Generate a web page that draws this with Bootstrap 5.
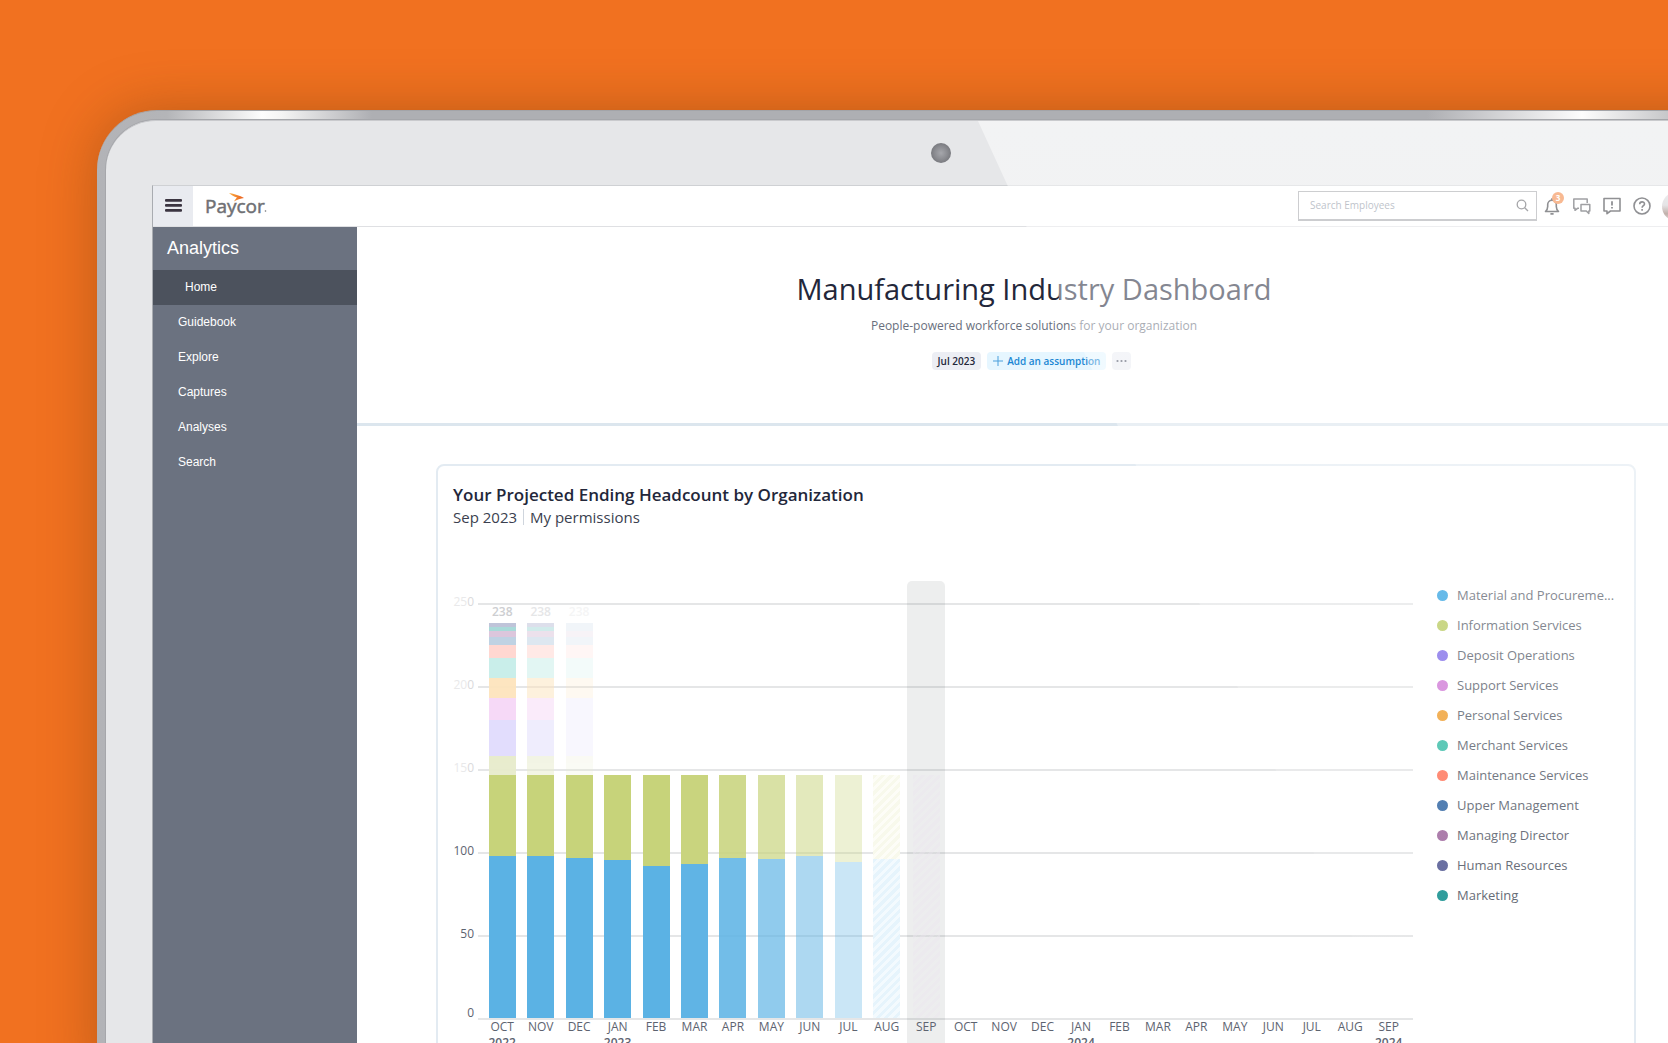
<!DOCTYPE html>
<html lang="en">
<head>
<meta charset="utf-8">
<meta name="viewport" content="width=device-width, initial-scale=1">
<title>Paycor Analytics</title>
<link href="https://cdn.jsdelivr.net/npm/bootstrap@5.3.0/dist/css/bootstrap.min.css" rel="stylesheet">
<style>
body{font-family:"Open Sans","Noto Sans",sans-serif;background:#f17120;color:#23273a}
.stage{height:100vh;padding:110px 0 0 97px}
/* tablet frame: runs past the right edge of the stage */
.device{width:calc(100% + 120px);padding:9px 9px 0;border-radius:60px 60px 0 0;
  background:linear-gradient(90deg,#b2b3b7 0,#b4b5b8 70px,#fdfdfd 165px,#f4f4f4 185px,#aeafb3 275px,#aeafb3 calc(100% - 360px),#fdfdfd calc(100% - 205px),#b4b5b8 calc(100% - 90px));
  border:1px solid #a3a4a8;border-width:1px 1px 0 0;box-shadow:0 0 55px rgba(110,60,10,.4)}
.bezel{background:#e6e7e9;border-radius:50px 50px 0 0;padding:0 66px 0 46px;box-shadow:0 0 0 1px #a6a7ab;border-top:1px solid #c9cacd}
.cam-row{height:64px}
.cam{width:20px;height:20px;border-radius:50%;background:radial-gradient(#a6a7ac 0,#8b8c91 45%,#6c6d72 90%);margin-right:-18px}
.glare{inset:0;z-index:5;pointer-events:none;background:linear-gradient(rgba(255,255,255,.5) 0,rgba(255,255,255,.43) 200px,rgba(255,255,255,.27) 500px,rgba(255,255,255,0) 922px);clip-path:polygon(872px 0,100% 0,100% 922px,1295px 922px)}
.screen{background:#fff;border:1px solid #c6c8cb;border-color:#cfd1d4 #c6c8cb #c6c8cb #a9acb1}
.topbar{height:41px;border-bottom:1px solid #dfe0e3;padding-right:20px}
.menu-btn{width:40px;height:40px;background:#e9ebf0;border:0}
.brand{font-size:19px;line-height:22px;color:#6f7074;margin-left:12px;-webkit-text-stroke:.5px #6f7074}
.brand svg{left:0;top:-2px}
.find{width:239px;height:30px;border:1px solid #a0a1a6;border-bottom-width:2px;padding:0 7px 0 11px}
.find input{font-size:10px;color:#555;min-width:0;outline:0;background:none}
.find input::placeholder{color:#848d9b;opacity:1}
.tools{gap:10px;margin-left:5px}
.tool{width:20px;height:28px;background:none;border:0;line-height:0}
.alert-count{width:12px;height:12px;left:10px;top:0;border-radius:50%;background:#f27a30;color:#fff;font-size:8px;line-height:12px;font-weight:700}
.avatar{width:29px;height:29px;border-radius:50%;background:linear-gradient(#d9d9dc 0,#cfcdd0 45%,#8a6a60 75%,#c9c1bd)}
.side{width:204px;background:#6b7280;font-family:"Liberation Sans",Arial,sans-serif;color:#fff}
.side-head{font-size:18px;line-height:43px;padding-left:14px;font-weight:400}
.side a{font-size:12px;line-height:35px;color:#fff;padding:0 0 0 25px;text-decoration:none}
.side a.active{background:#4c525d;padding-left:32px}
.hero{padding:42px 0 53px;border-bottom:3px solid #dce6ee}
.hero h1{font-size:29px;line-height:40px;font-weight:400;margin:0}
.hero p{font-size:12px;line-height:18px;margin:8px 0 17px;color:#696f7d}
.pills{gap:6px;padding-right:5px}
.pill{border:0;height:18px;font-size:10px;line-height:18px;font-weight:600;border-radius:4px;padding:0 6px;background:#eceef4;color:#23273a}
.pill-add{background:#e6f6ff;color:#1b87d3}
.panel{margin:38px 75px 0 79px;border:2px solid #e3ebf2;border-radius:8px;padding:17px 15px 20px}
.panel h2{font-size:17px;line-height:24px;font-weight:600;margin:0}
.panel-sub{font-size:15px;line-height:20px;color:#3b3f4f}
.bar-sep{width:1px;height:16px;background:#cfd5dd;margin:0 6px}
.board{margin-top:54px;gap:24px}
.plot{display:grid;min-width:0}
.plot>*{grid-area:1/1;min-width:0}
.axis{padding-top:22px}
.tick{height:83px;gap:4px}
.tick b{width:21px;font-size:12px;line-height:18px;margin-top:-10px;font-weight:400;text-align:right;color:#5d6370}
.tick hr{margin:0;border:0;border-top:2px solid #e5e6e7;opacity:1}
.tick.pale b{color:#e9e9ea}
.tick.pale b span{color:#dadadc}
.tick.base b{margin-top:-14px}
.tick.base{height:40px}
.bars{padding:0 5px 0 30px;font-size:12px;color:#5d6370}
.month{flex:1 1 0;min-width:0}
.month.now{background:rgba(60,70,70,.09);border-radius:5px 5px 0 0;margin:0 1px}
.pile{height:437px}
.pile>div{width:27px}
.total{line-height:22px;font-weight:600;color:#cdced1}
.mon{line-height:18px}
.yr{line-height:14px;font-weight:600}
.info{background:#c7d37a}.mat{background:#5bb2e4}
.fade-a{opacity:.97}.fade-b{opacity:.86}.fade-c{opacity:.68}.fade-d{opacity:.5}.fade-e{opacity:.32}
.hatch-info{background:repeating-linear-gradient(135deg,#f8f9ec 0 3px,#fdfdf7 3px 6px)}
.hatch-mat{background:repeating-linear-gradient(135deg,#e6f4fc 0 3px,#f3fafe 3px 6px)}
.now-info,.now-mat{background:repeating-linear-gradient(135deg,rgba(235,230,238,.5) 0 3px,rgba(235,233,238,.25) 3px 6px)}
.s-hr{background:#bcc1d8}.s-mk{background:#a5d9d8}.s-md{background:#dbc4db}.s-um{background:#bcd0e2}.s-mt{background:#ffd5cf}.s-mr{background:#c7eee9}.s-ps{background:#fde4bd}.s-ss{background:#f6d8f7}.s-do{background:#e1dcfd}.s-in{background:#e7ebcb}
.up{opacity:.95}.up2{opacity:.5}.up3{opacity:.2}
.legend{width:182px;font-size:13px;line-height:22px;color:#565c69;gap:8px;padding-top:3px}
.legend li{gap:9px}
.dot{width:11px;height:11px;border-radius:50%;flex:none}
.d-mat{background:#2a9fe0}.d-inf{background:#b6c85a}.d-dep{background:#7c69e8}.d-sup{background:#cf78d6}.d-per{background:#ef9c2c}.d-mer{background:#38bca6}.d-mai{background:#ff7459}.d-upp{background:#3468a4}.d-dir{background:#a06a9f}.d-hum{background:#575d95}.d-mkt{background:#1b9392}
</style>
<script src="https://cdn.jsdelivr.net/npm/bootstrap@5.3.0/dist/js/bootstrap.bundle.min.js"></script>
</head>
<body>
<div class="stage overflow-hidden">
<div class="device">
<div class="bezel position-relative">
  <div class="cam-row d-flex align-items-center justify-content-center"><div class="cam"></div></div>
  <div class="screen">
    <header class="topbar d-flex align-items-center">
      <button class="menu-btn d-flex align-items-center justify-content-center p-0" aria-label="Menu">
        <svg width="17" height="14" viewBox="0 0 17 14" fill="#3b3541"><rect y="0" width="17" height="2.800" rx="1"/><rect y="5" width="17" height="2.800" rx="1"/><rect y="10" width="17" height="2.800" rx="1"/></svg>
      </button>
      <a href="#" class="brand position-relative text-decoration-none">Paycor
        <svg class="position-absolute" width="64" height="24" viewBox="0 0 64 24"><defs><linearGradient id="sw"><stop offset="0" stop-color="#fbb040"/><stop offset="1" stop-color="#ea5b1c"/></linearGradient></defs><path d="M24 0 C29 1 35 2.500 39 5 C35.500 5.500 32 6.500 29 8.500 C30 6.500 31 5.500 32 4.500 C29 3.500 26.500 2 24 0 Z" fill="url(#sw)"/><circle cx="60.500" cy="18" r=".8" fill="#6f7074"/></svg>
      </a>
      <label class="find ms-auto d-flex align-items-center">
        <input class="border-0 p-0 flex-grow-1" type="text" placeholder="Search Employees" aria-label="Search Employees">
        <svg width="13" height="13" viewBox="0 0 13 13" fill="none" stroke="#55565c" stroke-width="1.300"><circle cx="5.500" cy="5.500" r="4.300"/><path d="M8.700 8.700 12 12"/></svg>
      </label>
      <div class="tools d-flex align-items-center">
        <button class="tool p-0 position-relative" aria-label="Notifications">
          <svg width="20" height="20" viewBox="0 0 20 20" fill="none" stroke="#2c2d33" stroke-width="1.600" stroke-linejoin="round"><path d="M3.500 15.500h13c-1.600-1.500-2.200-2.500-2.200-5V8.500a4.300 4.300 0 0 0-8.600 0v2c0 2.500-.6 3.500-2.200 5z"/><path d="M8.400 17.800h3.200M10 4V2.200" stroke-width="1.800"/></svg>
          <span class="alert-count position-absolute text-center">3</span>
        </button>
        <button class="tool p-0" aria-label="Messages">
          <svg width="20" height="20" viewBox="0 0 20 20" fill="none" stroke="#4a4b51" stroke-width="1.500" stroke-linejoin="round"><path d="M7 12.300H5.500l-2.500 2v-2H1.800V3h13.400v4"/><path d="M9 8.500h8.800v6.500h-1v2.500l-2.500-2.500H9z"/></svg>
        </button>
        <button class="tool p-0" aria-label="Feedback">
          <svg width="20" height="20" viewBox="0 0 20 20" fill="none" stroke="#2c2d33" stroke-width="1.600" stroke-linejoin="round"><path d="M2 2.500h16v12.500H8.500L5 17.700V15H2z"/><path d="M10 5.200v4.300M10 11v1.600" stroke-width="1.800"/></svg>
        </button>
        <button class="tool p-0" aria-label="Help">
          <svg width="20" height="20" viewBox="0 0 20 20" fill="none" stroke="#2c2d33" stroke-width="1.600"><circle cx="10" cy="10" r="8"/><path d="M7.700 8.300c0-3.300 4.800-3.100 4.800-.4 0 1.700-2.400 1.800-2.400 3.900M10.100 13.100v1.700"/></svg>
        </button>
        <div class="avatar"></div>
      </div>
    </header>
    <div class="d-flex">
      <nav class="side flex-shrink-0" aria-label="Analytics">
        <h2 class="side-head m-0">Analytics</h2>
        <a class="active d-block" href="#">Home</a>
        <a class="d-block" href="#">Guidebook</a>
        <a class="d-block" href="#">Explore</a>
        <a class="d-block" href="#">Captures</a>
        <a class="d-block" href="#">Analyses</a>
        <a class="d-block" href="#">Search</a>
      </nav>
      <main class="flex-grow-1">
        <section class="hero text-center">
          <h1>Manufacturing Industry Dashboard</h1>
          <p>People-powered workforce solutions for your organization</p>
          <div class="pills d-flex justify-content-center">
            <button class="pill">Jul 2023</button>
            <button class="pill pill-add d-flex align-items-center"><svg class="me-1" width="10" height="10" viewBox="0 0 10 10" stroke="#4a9fdc" stroke-width="1"><path d="M5 0v10M0 5h10"/></svg>Add an assumption</button>
            <button class="pill d-flex align-items-center px-1" aria-label="More"><svg width="11" height="4" viewBox="0 0 11 4" fill="#4f5666"><circle cx="1.500" cy="2" r="1.100"/><circle cx="5.500" cy="2" r="1.100"/><circle cx="9.500" cy="2" r="1.100"/></svg></button>
          </div>
        </section>
        <section class="panel">
          <h2>Your Projected Ending Headcount by Organization</h2>
          <div class="panel-sub d-flex align-items-center"><span>Sep 2023</span><span class="bar-sep"></span><span>My permissions</span></div>
          <div class="board d-flex">
            <div class="plot flex-grow-1">
              <div class="axis">
                <div class="tick pale d-flex"><b>25<span>0</span></b><hr class="flex-grow-1"></div>
                <div class="tick pale d-flex"><b>20<span>0</span></b><hr class="flex-grow-1"></div>
                <div class="tick pale d-flex"><b>15<span>0</span></b><hr class="flex-grow-1"></div>
                <div class="tick d-flex"><b>100</b><hr class="flex-grow-1"></div>
                <div class="tick d-flex"><b>50</b><hr class="flex-grow-1"></div>
                <div class="tick base d-flex"><b>0</b><hr class="flex-grow-1"></div>
              </div>
              <div class="bars d-flex text-center">
                <div class="month"><div class="pile d-flex flex-column justify-content-end align-items-center"><div class="total">238</div>
                  <div class="up"><div class="s-hr" style="height:4px"></div><div class="s-mk" style="height:4px"></div><div class="s-md" style="height:6px"></div><div class="s-um" style="height:8px"></div><div class="s-mt" style="height:13px"></div><div class="s-mr" style="height:20px"></div><div class="s-ps" style="height:20px"></div><div class="s-ss" style="height:22px"></div><div class="s-do" style="height:36px"></div><div class="s-in" style="height:19px"></div></div>
                  <div class="info" style="height:81px"></div><div class="mat" style="height:162px"></div></div><div class="mon">OCT</div><div class="yr">2022</div></div>
                <div class="month"><div class="pile d-flex flex-column justify-content-end align-items-center"><div class="total up2">238</div>
                  <div class="up2"><div class="s-hr" style="height:4px"></div><div class="s-mk" style="height:4px"></div><div class="s-md" style="height:6px"></div><div class="s-um" style="height:8px"></div><div class="s-mt" style="height:13px"></div><div class="s-mr" style="height:20px"></div><div class="s-ps" style="height:20px"></div><div class="s-ss" style="height:22px"></div><div class="s-do" style="height:36px"></div><div class="s-in" style="height:19px"></div></div>
                  <div class="info" style="height:81px"></div><div class="mat" style="height:162px"></div></div><div class="mon">NOV</div></div>
                <div class="month"><div class="pile d-flex flex-column justify-content-end align-items-center"><div class="total up3">238</div>
                  <div class="up3"><div class="s-um" style="height:8px"></div><div class="s-md" style="height:6px"></div><div class="s-um" style="height:8px"></div><div class="s-mt" style="height:13px"></div><div class="s-mr" style="height:20px"></div><div class="s-ps" style="height:20px"></div><div class="s-do" style="height:58px"></div><div class="s-in" style="height:19px"></div></div>
                  <div class="info" style="height:83px"></div><div class="mat" style="height:160px"></div></div><div class="mon">DEC</div></div>
                <div class="month"><div class="pile d-flex flex-column justify-content-end align-items-center"><div class="info" style="height:85px"></div><div class="mat" style="height:158px"></div></div><div class="mon">JAN</div><div class="yr">2023</div></div>
                <div class="month"><div class="pile d-flex flex-column justify-content-end align-items-center"><div class="info" style="height:91px"></div><div class="mat" style="height:152px"></div></div><div class="mon">FEB</div></div>
                <div class="month"><div class="pile d-flex flex-column justify-content-end align-items-center"><div class="info fade-a" style="height:89px"></div><div class="mat fade-a" style="height:154px"></div></div><div class="mon">MAR</div></div>
                <div class="month"><div class="pile d-flex flex-column justify-content-end align-items-center"><div class="info fade-b" style="height:83px"></div><div class="mat fade-b" style="height:160px"></div></div><div class="mon">APR</div></div>
                <div class="month"><div class="pile d-flex flex-column justify-content-end align-items-center"><div class="info fade-c" style="height:84px"></div><div class="mat fade-c" style="height:159px"></div></div><div class="mon">MAY</div></div>
                <div class="month"><div class="pile d-flex flex-column justify-content-end align-items-center"><div class="info fade-d" style="height:81px"></div><div class="mat fade-d" style="height:162px"></div></div><div class="mon">JUN</div></div>
                <div class="month"><div class="pile d-flex flex-column justify-content-end align-items-center"><div class="info fade-e" style="height:87px"></div><div class="mat fade-e" style="height:156px"></div></div><div class="mon">JUL</div></div>
                <div class="month"><div class="pile d-flex flex-column justify-content-end align-items-center"><div class="hatch-info" style="height:84px"></div><div class="hatch-mat" style="height:159px"></div></div><div class="mon">AUG</div></div>
                <div class="month now"><div class="pile d-flex flex-column justify-content-end align-items-center"><div class="now-info" style="height:84px"></div><div class="now-mat" style="height:159px"></div></div><div class="mon">SEP</div></div>
                <div class="month"><div class="pile"></div><div class="mon">OCT</div></div>
                <div class="month"><div class="pile"></div><div class="mon">NOV</div></div>
                <div class="month"><div class="pile"></div><div class="mon">DEC</div></div>
                <div class="month"><div class="pile"></div><div class="mon">JAN</div><div class="yr">2024</div></div>
                <div class="month"><div class="pile"></div><div class="mon">FEB</div></div>
                <div class="month"><div class="pile"></div><div class="mon">MAR</div></div>
                <div class="month"><div class="pile"></div><div class="mon">APR</div></div>
                <div class="month"><div class="pile"></div><div class="mon">MAY</div></div>
                <div class="month"><div class="pile"></div><div class="mon">JUN</div></div>
                <div class="month"><div class="pile"></div><div class="mon">JUL</div></div>
                <div class="month"><div class="pile"></div><div class="mon">AUG</div></div>
                <div class="month"><div class="pile"></div><div class="mon">SEP</div><div class="yr">2024</div></div>
              </div>
            </div>
            <ul class="legend list-unstyled d-flex flex-column flex-shrink-0 mb-0">
              <li class="d-flex align-items-center"><span class="dot d-mat"></span>Material and Procureme...</li>
              <li class="d-flex align-items-center"><span class="dot d-inf"></span>Information Services</li>
              <li class="d-flex align-items-center"><span class="dot d-dep"></span>Deposit Operations</li>
              <li class="d-flex align-items-center"><span class="dot d-sup"></span>Support Services</li>
              <li class="d-flex align-items-center"><span class="dot d-per"></span>Personal Services</li>
              <li class="d-flex align-items-center"><span class="dot d-mer"></span>Merchant Services</li>
              <li class="d-flex align-items-center"><span class="dot d-mai"></span>Maintenance Services</li>
              <li class="d-flex align-items-center"><span class="dot d-upp"></span>Upper Management</li>
              <li class="d-flex align-items-center"><span class="dot d-dir"></span>Managing Director</li>
              <li class="d-flex align-items-center"><span class="dot d-hum"></span>Human Resources</li>
              <li class="d-flex align-items-center"><span class="dot d-mkt"></span>Marketing</li>
            </ul>
          </div>
        </section>
      </main>
    </div>
  </div>
  <div class="glare position-absolute"></div>
</div>
</div>
</div>
</body>
</html>
